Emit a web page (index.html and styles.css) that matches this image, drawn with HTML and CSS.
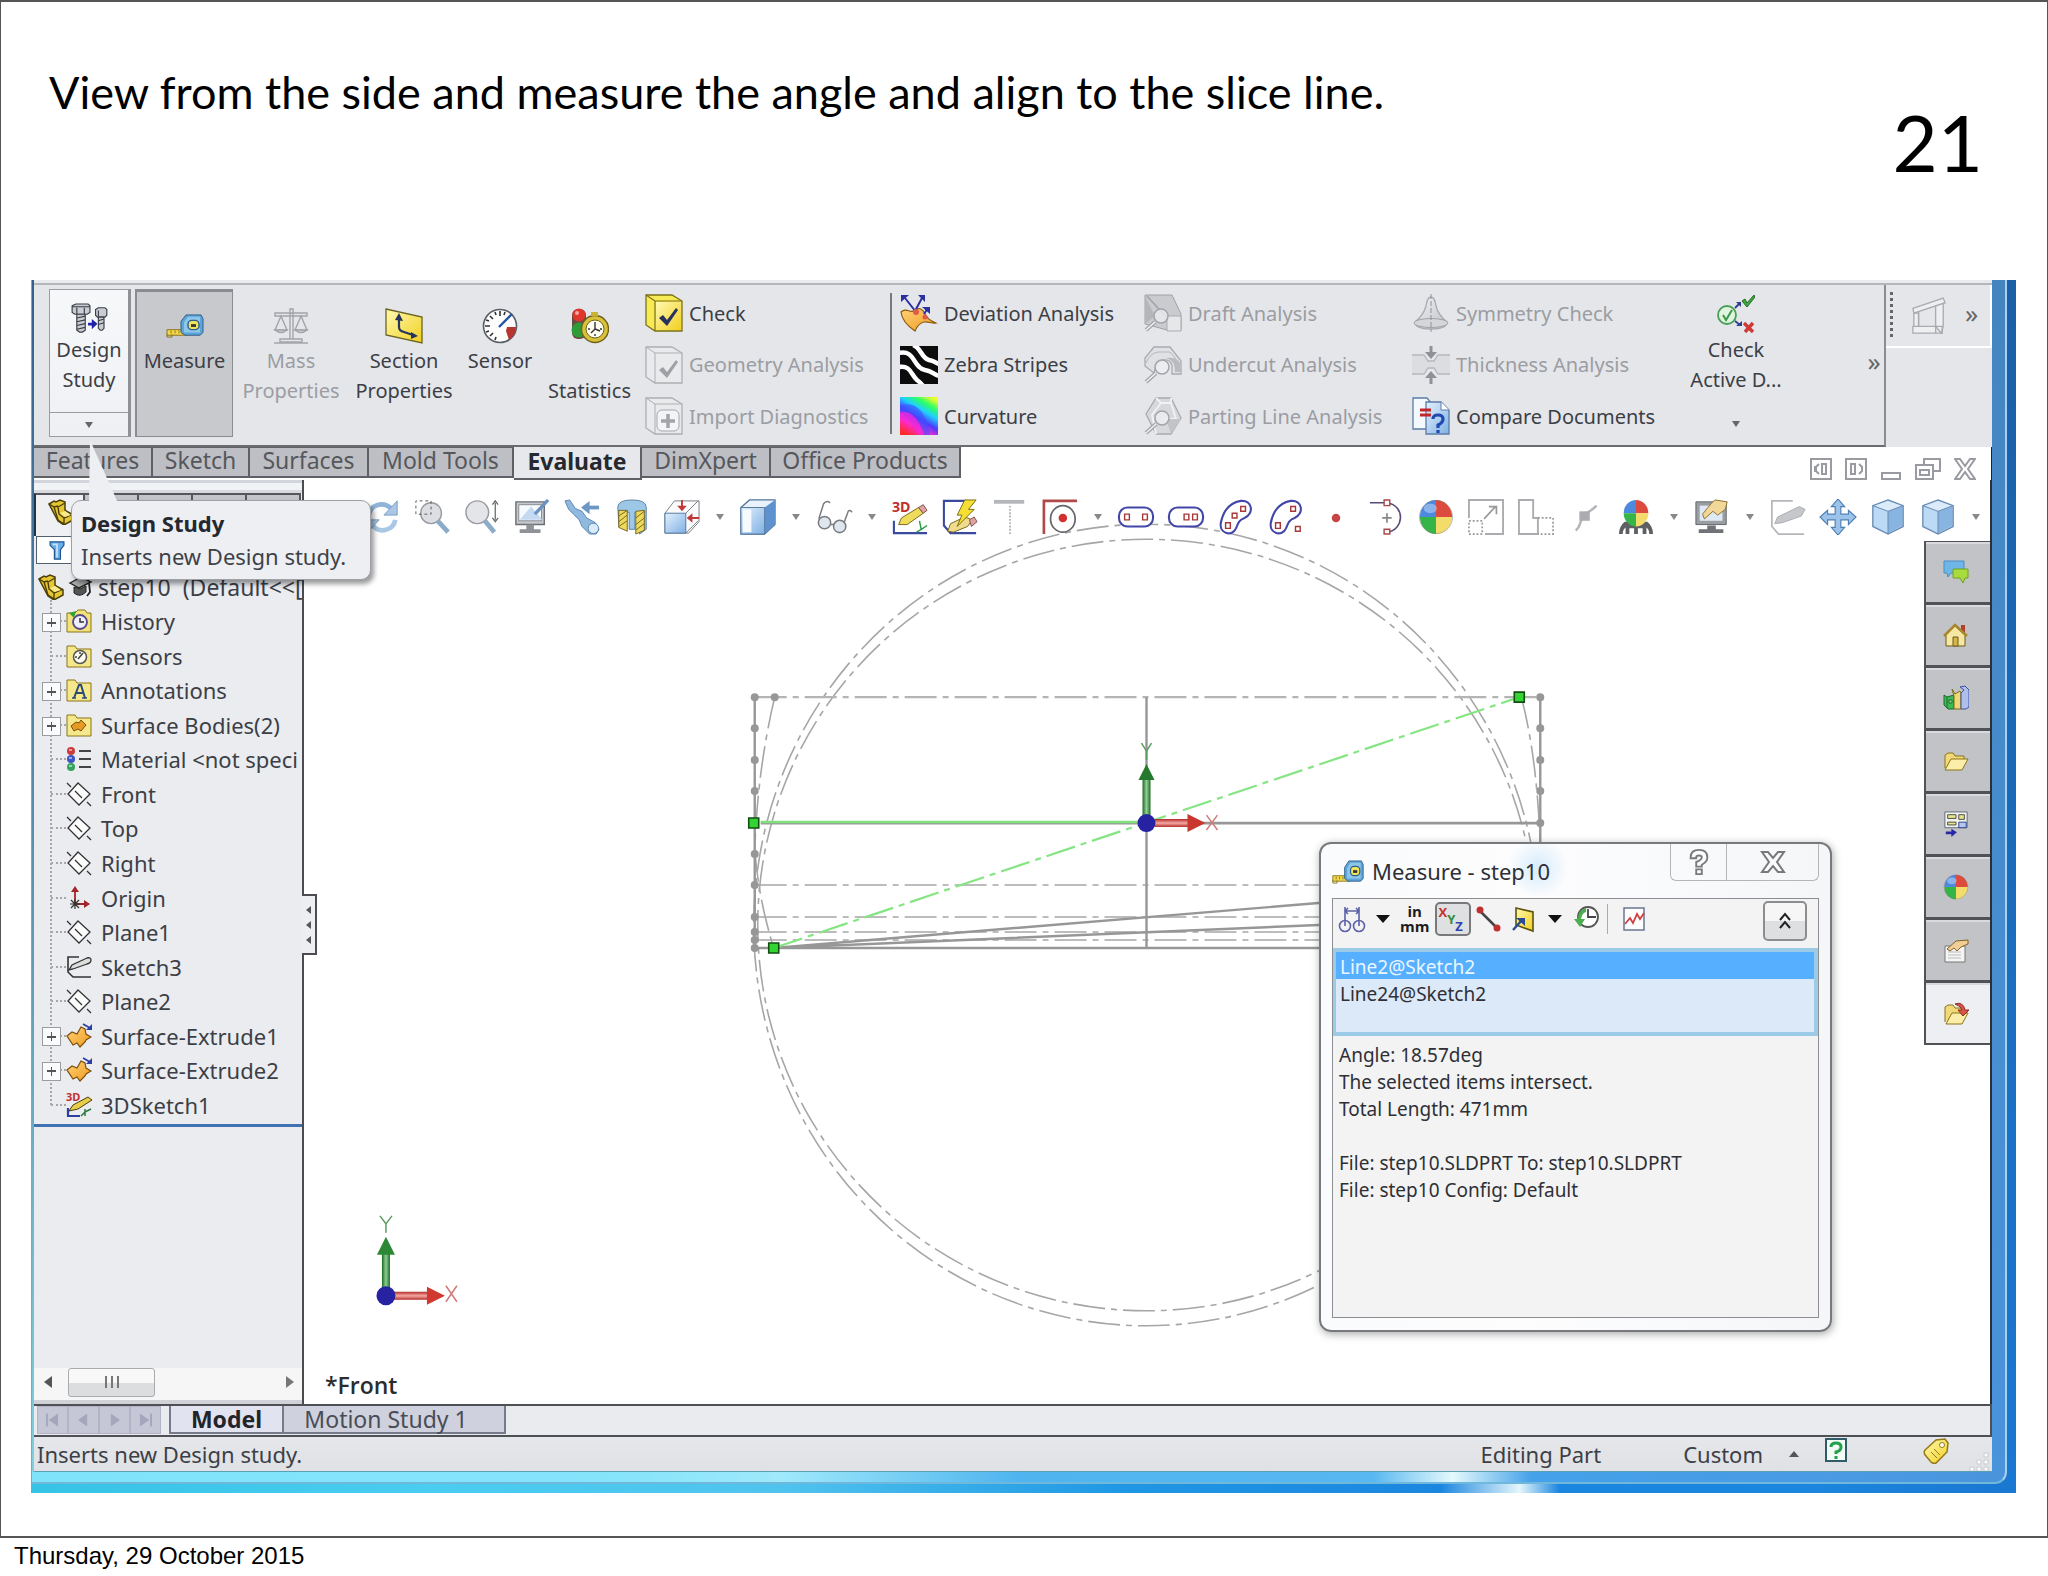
FILE: index.html
```html
<!DOCTYPE html>
<html lang="en">
<head>
<meta charset="utf-8">
<title>Slide 21 - Design Study</title>
<link rel="stylesheet" href="styles.css">
</head>
<body>
<svg class="sprite" aria-hidden="true">
  <defs>
    <linearGradient id="g-blue" x1="0" y1="0" x2="1" y2="1"><stop offset="0" stop-color="#e4f1fc"/><stop offset="1" stop-color="#7fb0e4"/></linearGradient>
    <linearGradient id="g-yellow" x1="0" y1="0" x2="1" y2="1"><stop offset="0" stop-color="#fff9b0"/><stop offset="1" stop-color="#f0d020"/></linearGradient>
    <linearGradient id="g-orange" x1="0" y1="0" x2="1" y2="1"><stop offset="0" stop-color="#ffd27a"/><stop offset="1" stop-color="#f09a1c"/></linearGradient>
    <linearGradient id="g-grey" x1="0" y1="0" x2="1" y2="1"><stop offset="0" stop-color="#f2f3f5"/><stop offset="1" stop-color="#bfc1c6"/></linearGradient>
    <linearGradient id="g-rain" x1="0.2" y1="1" x2="0.8" y2="0"><stop offset="0" stop-color="#ff2a2a"/><stop offset="0.25" stop-color="#ff2ad0"/><stop offset="0.45" stop-color="#4a3cff"/><stop offset="0.65" stop-color="#1fd0ff"/><stop offset="0.82" stop-color="#2aff6a"/><stop offset="1" stop-color="#e8ff2a"/></linearGradient>
    <linearGradient id="g-rod-v" x1="0" x2="1"><stop offset="0" stop-color="#1d6a25"/><stop offset="0.5" stop-color="#8fcf94"/><stop offset="1" stop-color="#1d6a25"/></linearGradient>
    <linearGradient id="g-rod-h" x1="0" y1="0" x2="0" y2="1"><stop offset="0" stop-color="#b32a2a"/><stop offset="0.5" stop-color="#f5a9a4"/><stop offset="1" stop-color="#b32a2a"/></linearGradient>
  </defs>

  <symbol id="i-bolts" viewBox="0 0 38 32">
    <g fill="#c9ccd2" stroke="#3a3d44" stroke-width="1.2"><path d="M1 3l4-2h13l2 2v7l-3 2H4l-3-2z"/><path d="M1 4h19M6 5v7M14 5v7" fill="none"/><path d="M6 12h9v17l-3 2H9l-3-2z"/><path d="M6 16l9-2M6 20l9-2M6 24l9-2M6 28l9-2" fill="none"/><path d="M26 7l3-2h7l2 2v6l-2 2h-8l-2-2z"/><path d="M29 15h6v12l-2 2h-2l-2-2z"/><path d="M29 19l6-2M29 23l6-2M29 8v6" fill="none"/></g>
    <path d="M18 21h4v-4l6 5-6 6v-4h-4z" fill="#2222a8"/>
  </symbol>
  <symbol id="i-tape" viewBox="0 0 38 26" preserveAspectRatio="none">
    <path d="M1 17h20v6H1z" fill="#f2d84a" stroke="#8a7318"/><path d="M1 22v3h5v-3M5 18v3M9 18v3M13 18v3" fill="none" stroke="#8a7318"/>
    <path d="M15 20V8l5-7h15l2 4v15l-3 3H19z" fill="#5fa4d6" stroke="#2c5d8c"/><path d="M18 20V9l4-6h12v17z" fill="#8cc6ea"/>
    <rect x="22" y="7" width="11" height="10" rx="4" fill="#f0e45a" stroke="#2c5d8c" stroke-width="1.4"/><path d="M25 11h5v3h-5z" fill="#333"/>
  </symbol>
  <symbol id="i-scale" viewBox="0 0 36 36">
    <g fill="none" stroke="#a2a4a9" stroke-width="1.4"><path d="M2 5h32v3H2zM17 1h3v30h-3zM7 31h22v3H7zM8 8L2 22h12zM28 8l-6 14h12z"/><path d="M1 35h34"/><path d="M2 22q6 5 12 0zM22 22q6 5 12 0z" fill="#d5d6da"/></g>
  </symbol>
  <symbol id="i-section" viewBox="0 0 38 36">
    <path d="M1 1l36 8v26L1 27z" fill="url(#g-yellow)" stroke="#6b6420" stroke-width="1.3"/><path d="M14 11v8q0 4 5 5l9 3" fill="none" stroke="#24345c" stroke-width="2.2"/><path d="M14 5l-4 7 8 1zM33 28l-7-4v7z" fill="#24345c"/>
  </symbol>
  <symbol id="i-gauge" viewBox="0 0 36 36">
    <circle cx="18" cy="18" r="16.5" fill="#fdfdfd" stroke="#5a5e66" stroke-width="1.6"/><path d="M34 19a16 16 0 0 1-7 13l-3-9 1-4z" fill="#b8342e"/><path d="M18 3v5M8 8l3 3M3 18h5M8 28l3-3M13 4l1 3M4 12l3 1M4 24l3-1M13 32l1-3M23 4l-1 3" stroke="#333" stroke-width="1.6"/><path d="M17 19L30 6" stroke="#2454a8" stroke-width="2.4"/>
  </symbol>
  <symbol id="i-stats" viewBox="0 0 38 36">
    <rect x="1" y="1" width="14" height="30" rx="6" fill="#6b4a42"/><circle cx="8" cy="7" r="6.5" fill="#e0362e"/><circle cx="6" cy="5" r="2" fill="#f6a49c"/><circle cx="8" cy="22" r="7.500" fill="#2f9a38"/><circle cx="24" cy="21" r="13.500" fill="#d9c23a" stroke="#6f611a" stroke-width="1.4"/><circle cx="24" cy="21" r="9" fill="#fffef2" stroke="#6f611a"/><path d="M24 14v7l5 2M24 21l-4 4M17 21h2M24 28v-2M31 21h-2" fill="none" stroke="#333" stroke-width="1.4"/><path d="M20 4h7v4h-7z" fill="#c9b236"/>
  </symbol>
  <symbol id="i-check" viewBox="0 0 38 38">
    <path d="M1 1h26l10 6v30H10L1 31z" fill="#f7ea55" stroke="#7d7016" stroke-width="1.3"/><path d="M1 1l9 6h27M10 7v30" fill="none" stroke="#7d7016" stroke-width="1.2"/><path d="M11 8h25v28H11z" fill="url(#g-yellow)"/><path d="M14 24l4-3 4 5 9-12 2 2-11 16z" fill="#27305e"/>
  </symbol>
  <symbol id="i-check-off" viewBox="0 0 38 38">
    <path d="M1 1h26l10 6v30H10L1 31z" fill="#e9eaec" stroke="#adafb3" stroke-width="1.3"/><path d="M1 1l9 6h27M10 7v30" fill="none" stroke="#adafb3"/><path d="M14 24l4-3 4 5 9-12 2 2-11 16z" fill="#9ea0a5"/>
  </symbol>
  <symbol id="i-import-off" viewBox="0 0 38 38">
    <path d="M1 1h26l10 6v30H10L1 31z" fill="#e9eaec" stroke="#adafb3" stroke-width="1.3"/><path d="M1 1l9 6h27M10 7v30" fill="none" stroke="#adafb3"/><rect x="12" y="13" width="22" height="21" rx="5" fill="#f4f4f6" stroke="#a5a7ab"/><path d="M23 17v14M16 24h14" stroke="#a2a4a9" stroke-width="3.500"/>
  </symbol>
  <symbol id="i-deviation" viewBox="0 0 38 38">
    <path d="M1 18c6-6 9 3 14-2 4-3 8-1 10 4s6 7 11 9c-4 1-8-2-12-1s-7 4-9 9C9 33 2 27 1 18z" fill="url(#g-orange)" stroke="#8a5a12" stroke-width="1.2"/><path d="M16 18L5 4M15 17l7-13M24 20l4-6" stroke="#2b2fa0" stroke-width="2"/><path d="M1 1h8L1 8zM18 1h7v7zM22 13h8v7z" fill="#2b2fa0"/><circle cx="16" cy="18" r="3" fill="#e05a4a"/><circle cx="25" cy="23" r="2.500" fill="#e05a4a"/>
  </symbol>
  <symbol id="i-zebra" viewBox="0 0 38 38">
    <rect width="38" height="38" fill="#0c0c0c"/><g fill="none" stroke="#fff" stroke-width="4.500"><path d="M-1 7c16-4 14 15 26 17 8 1 8 5 15 6"/><path d="M-1 21c12-2 12 8 18 13 4 3 5 4 6 6"/><path d="M13-1c8 2 8 13 16 15 5 1 7 3 10 4"/></g>
  </symbol>
  <symbol id="i-curvature" viewBox="0 0 38 38"><rect width="38" height="38" fill="url(#g-rain)"/><path d="M0 16c12-4 18 6 24 22h-6C14 26 8 22 0 24z" fill="#f02ad8" opacity=".7"/><path d="M0 8c18-4 26 8 30 30h-6C18 18 12 12 0 15z" fill="#3c50ff" opacity=".6"/></symbol>
  <symbol id="i-draft" viewBox="0 0 38 38">
    <path d="M1 1h27l9 19v16H23L1 30z" fill="#c9cbcf" stroke="#a0a2a7"/><path d="M3 2l20 22" stroke="#a0a2a7" stroke-width="1.500"/><path d="M1 2v28l10-8z" fill="#b4b6ba"/><path d="M23 22h14v15H23z" fill="#e6e7e9" stroke="#a9abb0"/><circle cx="17" cy="22" r="7" fill="#e9eaec" fill-opacity=".85" stroke="#a2a4a9" stroke-width="1.500"/><path d="M11 28l-9 8" stroke="#a2a4a9" stroke-width="4"/><path d="M11 28l-9 8" stroke="#eeeff1" stroke-width="1.600"/>
  </symbol>
  <symbol id="i-undercut" viewBox="0 0 38 38">
    <path d="M1 20V12L10 1h16l11 14v13h-9v-8q-1-7-9-6-7 1-9 13z" fill="#e0e1e4" stroke="#a9abb0" stroke-width="1.300"/><path d="M2 17q4-10 12-11h12l6 7" fill="none" stroke="#b5b7bb"/><path d="M22 12q9 2 9 14h5V17q-3-6-14-5z" fill="#b9bbbf"/><circle cx="18" cy="21" r="7" fill="#eeeff1" fill-opacity=".8" stroke="#a2a4a9" stroke-width="1.500"/><path d="M12 27l-10 9" stroke="#a2a4a9" stroke-width="4"/><path d="M12 27l-10 9" stroke="#eeeff1" stroke-width="1.600"/>
  </symbol>
  <symbol id="i-parting" viewBox="0 0 38 38">
    <path d="M12 1h15l10 20-10 16H12L2 17z" fill="#d6d8db" stroke="#a9abb0" stroke-width="1.300"/><path d="M12 1l5 5h10v-5M17 6L8 18l4 19M27 6l5 16H21" fill="none" stroke="#f2f2f4" stroke-width="1.800"/><path d="M22 22h15L27 37z" fill="#c2c4c8"/><circle cx="18" cy="21" r="7" fill="#eeeff1" fill-opacity=".8" stroke="#a2a4a9" stroke-width="1.500"/><path d="M12 27l-10 9" stroke="#a2a4a9" stroke-width="4"/><path d="M12 27l-10 9" stroke="#eeeff1" stroke-width="1.600"/>
  </symbol>
  <symbol id="i-symmetry" viewBox="0 0 38 38">
    <path d="M19 3c-3 0-4 3-5 9-2 8-6 12-11 16q0 7 16 7t16-7c-5-4-9-8-11-16-1-6-2-9-5-9z" fill="url(#g-grey)" stroke="#a9abb0" stroke-width="1.300"/><ellipse cx="19" cy="29" rx="17" ry="4.500" fill="#d4d6d9" stroke="#a0a2a7"/><path d="M19 0v38" stroke="#8f9196" stroke-dasharray="5 2"/>
  </symbol>
  <symbol id="i-thickness" viewBox="0 0 38 38">
    <path d="M0 10h11l5 5h6l5-5h11v17H27l-5-5h-6l-5 5H0z" fill="#dcdde0"/><path d="M0 9h12l4 6h6l4-6h12M0 28h12l4-6h6l4 6h12" fill="none" stroke="#b4b6ba" stroke-width="1.300"/><path d="M19 0v7M19 38v-7" stroke="#8f9196" stroke-width="3"/><path d="M13 6h12l-6 7zM13 32h12l-6-7z" fill="#8f9196"/>
  </symbol>
  <symbol id="i-compare" viewBox="0 0 38 38">
    <path d="M1 1h14l5 6v25H1z" fill="#f4f9fe" stroke="#5b7ca8" stroke-width="1.300"/><path d="M14 5h15l8 8v24H14z" fill="url(#g-blue)" stroke="#5b7ca8" stroke-width="1.300"/><path d="M29 5v8h8" fill="#fff" stroke="#5b7ca8"/><path d="M8 13h11M8 18h11" stroke="#c0282a" stroke-width="3"/><path d="M21 22q0-4 5-4t5 4-5 6v3M26 33v3" fill="none" stroke="#2048b0" stroke-width="3.200"/>
  </symbol>
  <symbol id="i-active" viewBox="0 0 38 38">
    <circle cx="10" cy="20" r="9" fill="#dff5df" stroke="#4c9c58" stroke-width="1.800"/><path d="M6 20l3 5 6-10" fill="none" stroke="#3a9a48" stroke-width="2"/><path d="M18 13l4-4M18 26l5 4" stroke="#2d3f8f" stroke-width="1.800"/><path d="M19 7h5v5zM19 31h6v-5z" fill="#2d3f8f"/><path d="M25 6l3-2 2 4 7-8 1 2-8 10z" fill="#3da83d" stroke="#236b23"/><path d="M27 28l9 9M36 28l-8 9" stroke="#cf3a36" stroke-width="3.400"/>
  </symbol>
  <symbol id="i-plane-off" viewBox="0 0 38 40">
    <g fill="#eeeff1" stroke="#a9abb0" stroke-width="1.400"><path d="M26 8l8-4v27l-2 7-6-7z"/><path d="M3 17h5v15H3z"/><path d="M2 12L34 1l2 5L3 17z"/><path d="M2 31h24v7H2z"/><path d="M8 15v16M26 31h7v7h-7" fill="none"/></g>
  </symbol>

  <symbol id="v-refresh" viewBox="0 0 38 38"><g fill="none" stroke-width="5"><path d="M5 17C7 6 20 2 29 10" stroke="#8fb4d8"/><path d="M33 22C31 33 17 37 9 28" stroke="#a9c8e6"/></g><path d="M35 2v15H21zM3 36V22h13z" fill="#a9c8e6" stroke="#7b9dc2"/></symbol>
  <symbol id="v-zoomarea" viewBox="0 0 38 38"><circle cx="18" cy="15" r="11" fill="#dcdee1" stroke="#989ba1" stroke-width="1.500"/><path d="M2 16V2h16v14z" fill="none" stroke="#555" stroke-dasharray="3 3"/><path d="M25 23l11 12" stroke="#8cabc9" stroke-width="5"/></symbol>
  <symbol id="v-zoomfit" viewBox="0 0 38 38"><circle cx="14" cy="14" r="12" fill="#e3e5e8" stroke="#989ba1" stroke-width="1.500"/><path d="M22 23l10 12" stroke="#8cabc9" stroke-width="5"/><path d="M33 4v18M30 6l3-4 3 4M30 20l3 4 3-4" fill="none" stroke="#666" stroke-width="1.300"/></symbol>
  <symbol id="v-monitor" viewBox="0 0 38 38"><path d="M2 3h30v24H2z" fill="#c5c8cc" stroke="#6c6f75" stroke-width="1.500"/><path d="M5 6h24v17H5z" fill="#f7fafd" stroke="#85888d"/><path d="M6 22L18 8l12 14z" fill="#c3daf0"/><path d="M22 16L36 1" stroke="#6a93c0" stroke-width="3.500"/><path d="M13 27h8v5h7v4H6v-4h7z" fill="#8f9297"/></symbol>
  <symbol id="v-scope" viewBox="0 0 38 38"><path d="M1 2l5-1 6 9 7 3 5 7 9 5 4 7-3 5-7 0-8-8-3-7-6-6-5-5z" fill="#8fb9df" stroke="#5b84ad"/><circle cx="31" cy="31" r="5.500" fill="#d9eaf8" stroke="#5b84ad"/><path d="M21 7h16v4H21z" fill="#6d98c6"/><path d="M27 2v14l-9-7z" fill="#6d98c6"/></symbol>
  <symbol id="v-cut" viewBox="0 0 34 38"><path d="M2 8q1-7 15-7t15 7v24l-7 5V14h-5v18l-6 0V14h-3v17l-8-4z" fill="#9cc7e6" stroke="#5780a0"/><path d="M3 12h9v22l-9-4zM21 13l9-1v21l-9 4z" fill="#efd95a" stroke="#6f6526"/><path d="M3 18l9-6M3 24l9-7M3 29l9-6M21 20l9-7M21 27l9-7M21 33l9-7" stroke="#6f6526"/></symbol>
  <symbol id="v-box-arrows" viewBox="0 0 38 38"><path d="M1 15l10-13h26v22L26 36H1z" fill="#fbfbfc" stroke="#777b82"/><path d="M1 15h22v21H1z" fill="url(#g-blue)" stroke="#4e76a3"/><path d="M23 15L36 2M23 36l13-13" stroke="#777b82"/><path d="M19 1v9M37 20H27" stroke="#c03a38" stroke-width="2"/><path d="M14 7h10l-5 6zM30 15v10l-6-5z" fill="#c03a38"/></symbol>
  <symbol id="v-box" viewBox="0 0 38 38"><path d="M1 9l9-8h27v26L26 37H1z" fill="#e8f2fb" stroke="#52749b" stroke-width="1.300"/><path d="M26 9l11-8v26L26 37z" fill="#5e92cf"/><path d="M1 9h25v28H1z" fill="url(#g-blue)" stroke="#52749b"/><path d="M3 11h9v24H3z" fill="#f6fafe"/></symbol>
  <symbol id="v-glasses" viewBox="0 0 38 38"><g fill="#dfe6ee" stroke="#777b82" stroke-width="1.600"><circle cx="9" cy="25" r="6.500"/><circle cx="25" cy="29" r="6.500"/><path d="M15 27l4 0M3 21L8 5q3-4 7-1M30 24l4-11q2-2 4 1" fill="none"/></g></symbol>
  <symbol id="v-rapid" viewBox="0 0 38 38"><path d="M25 2H2v26l7 8h27" fill="none" stroke="#3949a0" stroke-width="2.200"/><path d="M6 34l3-8 15-7 8 3-5 7-15 6z" fill="#f0dc8c" stroke="#726414"/><path d="M29 22l5-3 3 5-6 5z" fill="#e2a3a0" stroke="#7a5050"/><path d="M24 1h12l-8 10h6L16 29l5-12h-5z" fill="#f5df35" stroke="#776a10"/></symbol>
  <symbol id="v-tee" viewBox="0 0 38 38"><path d="M2 3h32" stroke="#b4b6ba" stroke-width="4"/><path d="M19 7v30" stroke="#a3a5aa" stroke-width="1.600" stroke-dasharray="2 1.500"/></symbol>
  <symbol id="v-tangent" viewBox="0 0 38 38"><path d="M2 37V2h35" fill="none" stroke="#b04a4a" stroke-width="2.800"/><ellipse cx="22" cy="21" rx="13" ry="14" fill="none" stroke="#63666c" stroke-width="1.800"/><circle cx="22" cy="20" r="4.500" fill="#d22f2f"/></symbol>
  <symbol id="v-slot1" viewBox="0 0 38 38"><rect x="1" y="9" width="36" height="20" rx="9" fill="#fff" stroke="#4146a8" stroke-width="2.200"/><path d="M7 16h5v6H7zM26 16h5v6h-5z" fill="#fff" stroke="#a83838" stroke-width="1.500"/></symbol>
  <symbol id="v-slot2" viewBox="0 0 38 38"><rect x="1" y="9" width="36" height="20" rx="9" fill="#fff" stroke="#4146a8" stroke-width="2.200"/><path d="M17 16h5v6h-5zM26 16h5v6h-5z" fill="#fff" stroke="#a83838" stroke-width="1.500"/></symbol>
  <symbol id="v-slot3" viewBox="0 0 38 38"><path d="M3 25Q7 5 24 2c13-1 14 14 4 18-6 2-7 6-9 11-4 9-18 6-16-6z" fill="#fff" stroke="#4146a8" stroke-width="2.200"/><path d="M24 8h5v5h-5zM15 15h5v5h-5zM8 25h5v6H8z" fill="#fff" stroke="#a83838" stroke-width="1.500"/></symbol>
  <symbol id="v-slot4" viewBox="0 0 38 38"><path d="M3 25Q7 5 24 2c13-1 14 14 4 18-6 2-7 6-9 11-4 9-18 6-16-6z" fill="#fff" stroke="#4146a8" stroke-width="2.200"/><path d="M24 8h5v5h-5zM8 25h5v6H8zM29 29h5v5h-5z" fill="#fff" stroke="#a83838" stroke-width="1.500"/></symbol>
  <symbol id="v-point" viewBox="0 0 38 38"><circle cx="19" cy="20" r="4.500" fill="#c84545"/></symbol>
  <symbol id="v-arc" viewBox="0 0 38 38"><path d="M2 4h18M20 4c20 3 18 29 0 31" fill="none" stroke="#5b4a78" stroke-width="1.700"/><path d="M17 1h6v6h-6zM17 32h6v5h-6z" fill="#fff" stroke="#a84848" stroke-width="1.500"/><path d="M20 15v10M15 20h10" stroke="#888" stroke-width="1.800"/></symbol>
  <symbol id="v-ball" viewBox="0 0 38 38"><path d="M19 19V1a17 18 0 0 0-17 18z" fill="#4c8ae0"/><path d="M19 19V1a17 18 0 0 1 17 18z" fill="#dd4a3e"/><path d="M19 19v18A17 18 0 0 1 2 19z" fill="#35b548"/><path d="M19 19v18a17 18 0 0 0 17-18z" fill="#f3dc6a"/><ellipse cx="13" cy="10" rx="7" ry="5" fill="#fff" opacity=".35"/><circle cx="19" cy="19" r="17.500" fill="none" stroke="#777" stroke-opacity=".5"/></symbol>
  <symbol id="v-scaleup" viewBox="0 0 38 38"><path d="M1 20V1h36v36H18" fill="none" stroke="#aaacb0" stroke-width="2"/><path d="M1 23h14v14H1z" fill="none" stroke="#999" stroke-width="1.800" stroke-dasharray="2 2"/><path d="M17 21L29 8M22 8h8v8" fill="none" stroke="#999" stroke-width="1.800"/></symbol>
  <symbol id="v-ell" viewBox="0 0 38 38"><path d="M16 21V1H1v36h20V20h-5" fill="none" stroke="#aaacb0" stroke-width="2"/><path d="M21 20h16v17H21" fill="none" stroke="#999" stroke-width="1.800" stroke-dasharray="2 2"/></symbol>
  <symbol id="v-split" viewBox="0 0 38 38"><path d="M8 33c5-2 5-11 8-15s9-5 14-11" fill="none" stroke="#b4b6ba" stroke-width="2.600"/><path d="M12 13h11v10H12z" fill="#aaacb0"/></symbol>
  <symbol id="v-display" viewBox="0 0 38 38"><path d="M1 37q0-8 6-13h24q6 5 6 13h-4q0-5-3-7v7h-4v-6h-5v6h-4v-6h-5v6H8v-7q-3 2-3 7z" fill="#5d5f63"/><path d="M19 15V1a13 14 0 0 0-13 14z" fill="#4c8ae0"/><path d="M19 15V1a13 14 0 0 1 13 14z" fill="#dd4a3e"/><path d="M19 15v14A13 14 0 0 1 6 15z" fill="#35b548"/><path d="M19 15v14a13 14 0 0 0 13-14z" fill="#f3dc6a"/></symbol>
  <symbol id="v-viewset" viewBox="0 0 38 38"><path d="M2 3h32v24H2z" fill="#9a9da2" stroke="#5f6267"/><path d="M6 7h24v16H6z" fill="#dfe9f3"/><path d="M14 28h9v4h8v4H5v-4h9z" fill="#6f7277"/><path d="M9 16L18 5l4-4 13 2-2 8-8 6-5-4-9 8z" fill="#f1d898" stroke="#8b6d2b"/></symbol>
  <symbol id="v-pencil-off" viewBox="0 0 38 38"><path d="M24 2H2v27l7 8h27" fill="none" stroke="#b4b6ba" stroke-width="1.800"/><path d="M5 26l3-7L31 8l6 3-4 7-20 7z" fill="#c6c7ca" stroke="#a9abb0"/></symbol>
  <symbol id="v-move" viewBox="0 0 38 38"><path d="M19 0l7 8h-4v8h8v-4l8 7-8 8v-5h-8v8h4l-7 8-7-8h4v-8H8v5l-8-8 8-7v4h8V8h-4z" fill="#9cc3ea" stroke="#4f7eb2" stroke-width="1.200"/></symbol>
  <symbol id="v-cube" viewBox="0 0 38 38"><path d="M19 1l16 6v22L19 37 3 29V7z" fill="#a9cdf0" stroke="#6588b0" stroke-width="1.400"/><path d="M19 13L4 8v20l15 8z" fill="#bcdaf5"/><path d="M19 13l15-5v20l-15 8z" fill="#88b4e2"/><path d="M19 2L5 7l14 6 14-6z" fill="#dcebfa"/><path d="M3 7l16 6 16-6M19 13v24" fill="none" stroke="#6588b0"/></symbol>

  <symbol id="t-part" viewBox="0 0 26 26"><path d="M1 5l5-3 2 1 4-2 5 2v8l3 2 5 3v5l-9 5-6-4z" fill="#e6c733" stroke="#4c3f0a" stroke-width="1.500"/><path d="M1 5l5 3 4 13 6 4v-6l9-4M16 19l-5-4-1-7 7-4M6 8l4-1" fill="none" stroke="#4c3f0a" stroke-width="1.400"/><path d="M12 14l5-2 6 4-6 2z" fill="#f8ea8c"/></symbol>
  <symbol id="t-cap" viewBox="0 0 24 22"><path d="M1 7l11-6 10 5-12 6z" fill="#aaa" stroke="#222" stroke-width="1.400"/><path d="M5 11v6q6 5 12-1v-6l-6 3z" fill="#555" stroke="#222"/><path d="M20 7l1 9-3 4" fill="none" stroke="#222" stroke-width="1.800"/></symbol>
  <symbol id="t-history" viewBox="0 0 26 24"><path d="M1 4h8l3-3h7l2 3h4v19H1z" fill="#f2e27a" stroke="#8b7417"/><circle cx="14" cy="13" r="7" fill="#eef" stroke="#57468c" stroke-width="1.800"/><path d="M14 9v4h4" fill="none" stroke="#333" stroke-width="1.500"/><path d="M3 4l7-2-2 7z" fill="#34a034"/></symbol>
  <symbol id="t-sensors" viewBox="0 0 26 24"><path d="M1 2h8l2 3h14v18H1z" fill="#f5e88a" stroke="#8b7417"/><circle cx="14" cy="13" r="6.500" fill="#fbfbf0" stroke="#555" stroke-width="1.500"/><path d="M12 15l5-6M9 13h2M14 8v2" stroke="#444" stroke-width="1.500"/></symbol>
  <symbol id="t-bodies" viewBox="0 0 26 24"><path d="M1 2h8l2 3h14v18H1z" fill="#f5e88a" stroke="#8b7417"/><path d="M5 13l5-4 3 1 2-3 5 5-5 6-3-2-4 2z" fill="#e59a24" stroke="#7c4f0c"/></symbol>
  <symbol id="t-material" viewBox="0 0 26 24"><path d="M13 4h12M13 12h12M13 20h12" stroke="#444" stroke-width="2"/><circle cx="5" cy="4" r="4" fill="#cc3b3b"/><circle cx="5" cy="12" r="4" fill="#3b55c4"/><circle cx="5" cy="20" r="4" fill="#35a35b"/><path d="M3 3h3M3 11h3M3 19h3" stroke="#fff"/></symbol>
  <symbol id="t-plane" viewBox="0 0 26 24"><path d="M12 1l12 11-11 11L2 12z" fill="#fbfbfc" stroke="#333" stroke-width="1.300"/><path d="M1 1l4 4M9 9l7 7M21 20l4 4" stroke="#333" stroke-width="1.300"/></symbol>
  <symbol id="t-origin" viewBox="0 0 26 24"><path d="M9 18V3M9 18h14" stroke="#a3242a" stroke-width="1.800"/><path d="M5 6l4-6 4 6zM18 14l6 4-6 4z" fill="#a3242a"/><path d="M5 14l8 8M13 14l-8 8M9 13v10M4 18h10" stroke="#333" stroke-width="1.200"/></symbol>
  <symbol id="t-sketch" viewBox="0 0 26 24"><path d="M13 2H2v15l5 5h18" fill="none" stroke="#333" stroke-width="1.600"/><path d="M3 15l3-5 15-7q4-1 4 2t-4 4L7 14z" fill="#ddd" stroke="#333" stroke-width="1.300"/></symbol>
  <symbol id="t-surface" viewBox="0 0 26 26"><path d="M1 13l5-4 5 2 4-7 4 2 1 5 5 3-5 3-1 2-5 5-3-4-4 2z" fill="url(#g-orange)" stroke="#7c4f0c" stroke-width="1.200"/><path d="M17 1l7 4" stroke="#2e3fa4" stroke-width="1.800"/><path d="M20 7h6V1z" fill="#2e3fa4"/></symbol>
  <symbol id="t-filter" viewBox="0 0 18 22"><path d="M1 1h16v4l-4 5v11H6V10L1 5z" fill="#6aaee8" stroke="#20558f" stroke-width="1.400"/><path d="M4 4h5v15" fill="none" stroke="#c7e2f8" stroke-width="2"/></symbol>

  <symbol id="p-chat" viewBox="0 0 26 26"><path d="M1 2h20v12H8l-3 4-1-4H1z" fill="#6fb6e8" stroke="#4b8dc0"/><path d="M10 10h15v9h-3l-2 5-3-5h-7z" fill="#a8dc3c" stroke="#6fa31e"/></symbol>
  <symbol id="p-home" viewBox="0 0 26 26"><path d="M18 3h4v8h-4z" fill="#b0402c"/><path d="M3 13L12 4l10 9v11H3z" fill="#f6e7a2" stroke="#6d5a1a"/><path d="M1 14L12 3l12 11" fill="none" stroke="#a8862b" stroke-width="2.500"/><path d="M10 15h5v9h-5z" fill="#d8b54a" stroke="#6d5a1a"/></symbol>
  <symbol id="p-library" viewBox="0 0 26 26"><path d="M1 10l3 2 7-2v14H5l-4-4z" fill="#3fb955" stroke="#1c6a2c"/><path d="M4 12v11M6 15h3v3H6z" fill="#9fe0a8" stroke="#1c6a2c"/><path d="M9 4l3 5 5-3 1 2v16h-7V11z" fill="#efd876" stroke="#7d6a1b"/><path d="M17 2l5-1 4 4v17l-3 2h-5V8l3-3z" fill="#aebfec" stroke="#4050a0"/></symbol>
  <symbol id="p-folder" viewBox="0 0 26 26"><path d="M2 20V7l3-2h5l2 3h9v3" fill="#f1d878" stroke="#8b7417"/><path d="M2 22l6-11h17l-6 11z" fill="#fbeea8" stroke="#8b7417"/></symbol>
  <symbol id="p-palette" viewBox="0 0 26 28"><path d="M1 1h24v17H1z" fill="#f1f3ea" stroke="#5a647c"/><path d="M4 4h9v4H4zM4 12h9v3H4zM16 4h6v5h-6z" fill="#e7e58e" stroke="#444"/><path d="M16 12h8v6h-8z" fill="#b7c6ee" stroke="#2c3c8c"/><path d="M2 22h6v-3l6 4-6 5v-3H2z" fill="#2b28a6"/></symbol>
  <symbol id="p-props" viewBox="0 0 26 26"><path d="M2 9h20v16H2z" fill="#f5f5f4" stroke="#777"/><path d="M5 15h13M5 18h13M5 21h13" stroke="#bbb"/><path d="M4 12l9-8 12-1v4l-7 3-4 4-3-3-4 3z" fill="#f0cf96" stroke="#85602a"/></symbol>
  <symbol id="p-recover" viewBox="0 0 26 26"><path d="M2 22V7l3-2h5l2 3h9v4" fill="#f1d878" stroke="#8b7417"/><path d="M3 24l6-11h16l-6 11z" fill="#fbeea8" stroke="#8b7417"/><path d="M12 4q8-3 10 6h4l-6 6-5-6h4q-1-4-7-6z" fill="#d8554a" stroke="#8e2a22"/></symbol>
</svg>

<main class="slide">
  <header class="slide-head">
    <h1 class="slide-title">View from the side and measure the angle and align to the slice line.</h1>
    <p class="slide-number">21</p>
  </header>

  <section class="desktop">
    <div class="frame">
      <div class="app">
        <div class="topstrip"></div>

        <div class="ribbon-row">
          <div class="ribbon">
            <div class="split">
              <button class="big split-main"><svg class="ic-bolts"><use href="#i-bolts"/></svg><span>Design<br>Study</span></button>
              <button class="split-drop" aria-label="Design Study options"><i class="caret"></i></button>
            </div>
            <button class="big pressed"><svg class="ic-tape"><use href="#i-tape"/></svg><span>Measure</span></button>
            <button class="big w-mass off" disabled><svg class="ic36"><use href="#i-scale"/></svg><span>Mass<br>Properties</span></button>
            <button class="big w-section"><svg class="ic36"><use href="#i-section"/></svg><span>Section<br>Properties</span></button>
            <button class="big w-sensor"><svg class="ic36"><use href="#i-gauge"/></svg><span>Sensor</span></button>
            <button class="big w-stats"><svg class="ic36"><use href="#i-stats"/></svg><span><br>Statistics</span></button>
            <div class="col col-1">
              <button class="small"><svg><use href="#i-check"/></svg>Check</button>
              <button class="small off" disabled><svg><use href="#i-check-off"/></svg>Geometry Analysis</button>
              <button class="small off" disabled><svg><use href="#i-import-off"/></svg>Import Diagnostics</button>
            </div>
            <div class="divider"></div>
            <div class="col col-2">
              <button class="small"><svg><use href="#i-deviation"/></svg>Deviation Analysis</button>
              <button class="small"><svg><use href="#i-zebra"/></svg>Zebra Stripes</button>
              <button class="small"><svg><use href="#i-curvature"/></svg>Curvature</button>
            </div>
            <div class="col col-3">
              <button class="small off" disabled><svg><use href="#i-draft"/></svg>Draft Analysis</button>
              <button class="small off" disabled><svg><use href="#i-undercut"/></svg>Undercut Analysis</button>
              <button class="small off" disabled><svg><use href="#i-parting"/></svg>Parting Line Analysis</button>
            </div>
            <div class="col col-4">
              <button class="small off" disabled><svg><use href="#i-symmetry"/></svg>Symmetry Check</button>
              <button class="small off" disabled><svg><use href="#i-thickness"/></svg>Thickness Analysis</button>
              <button class="small"><svg><use href="#i-compare"/></svg>Compare Documents</button>
            </div>
            <button class="big w-active"><svg class="ic38"><use href="#i-active"/></svg><span>Check<br>Active D...</span><i class="caret"></i></button>
            <button class="more">»</button>
          </div>
          <div class="mini">
            <i class="grip"></i>
            <svg class="mini-ic"><use href="#i-plane-off"/></svg>
            <button class="more-mini">»</button>
          </div>
        </div>

        <div class="tab-row">
          <nav class="tabs">
            <button class="tab t-features">Features</button><button class="tab t-sketch">Sketch</button><button class="tab t-surfaces">Surfaces</button><button class="tab t-mold">Mold Tools</button><button class="tab t-eval active">Evaluate</button><button class="tab t-dim">DimXpert</button><button class="tab t-office">Office Products</button>
          </nav>
          <div class="winbtns">
            <svg viewBox="0 0 22 22"><path d="M1 1h20v20H1zM9 6L6 9v4l3 3M5 8v6M12 6h4v10h-4z"/></svg>
            <svg viewBox="0 0 22 22"><path d="M1 1h20v20H1zM6 6h4v10H6zM14 6l3 3v4l-3 3M17 8v6"/></svg>
            <svg viewBox="0 0 22 22"><path d="M2 15h18v6H2z"/></svg>
            <svg viewBox="0 0 26 22"><path d="M9 6V1h16v12h-7M1 7h17v14H1zM5 12h9v5H5z"/></svg>
            <svg viewBox="0 0 22 22"><path d="M1 1h5l5 7 5-7h5l-7 10 7 10h-5l-5-7-5 7H1l7-10z"/></svg>
          </div>
        </div>

        <div class="body">
          <aside class="panel">
            <div class="panel-strip"></div>
            <div class="panel-tabs"><span class="ptab on"><svg class="ic-tree"><use href="#t-part"/></svg></span><span class="ptab"></span><span class="ptab"></span><span class="ptab"></span><span class="ptab"></span></div>
            <div class="filter"><svg><use href="#t-filter"/></svg></div>
            <div class="root"><svg class="ic-tree"><use href="#t-part"/></svg><svg class="ic-cap"><use href="#t-cap"/></svg><span>step10&nbsp; (Default&lt;&lt;[</span></div>
            <ul class="tree">
              <li class="has"><svg><use href="#t-history"/></svg>History</li>
              <li><svg><use href="#t-sensors"/></svg>Sensors</li>
              <li class="has"><svg viewBox="0 0 26 24"><path d="M1 2h8l2 3h14v18H1z" fill="#f5e88a" stroke="#8b7417"/><path d="M8 20l5-13h2l4 13M10 15h7" fill="none" stroke="#2c4a78" stroke-width="2"/><path d="M6 20h4M16 20h5" stroke="#2c4a78" stroke-width="1.500"/></svg>Annotations</li>
              <li class="has"><svg><use href="#t-bodies"/></svg>Surface Bodies(2)</li>
              <li><svg><use href="#t-material"/></svg>Material &lt;not speci</li>
              <li><svg><use href="#t-plane"/></svg>Front</li>
              <li><svg><use href="#t-plane"/></svg>Top</li>
              <li><svg><use href="#t-plane"/></svg>Right</li>
              <li><svg><use href="#t-origin"/></svg>Origin</li>
              <li><svg><use href="#t-plane"/></svg>Plane1</li>
              <li><svg><use href="#t-sketch"/></svg>Sketch3</li>
              <li><svg><use href="#t-plane"/></svg>Plane2</li>
              <li class="has"><svg><use href="#t-surface"/></svg>Surface-Extrude1</li>
              <li class="has"><svg><use href="#t-surface"/></svg>Surface-Extrude2</li>
              <li><svg viewBox="0 0 26 26"><text x="0" y="9" class="glyph-red-small">3D</text><path d="M2 16v8h12" fill="none" stroke="#2e3fa4" stroke-width="2.200"/><path d="M3 19l4-6 15-8 4 3-14 9z" fill="#e8ce48" stroke="#4b3f0c"/><path d="M19 24v-7M19 20l6-3M19 20l-4 4" stroke="#2f7a40" stroke-width="1.500"/></svg>3DSketch1</li>
            </ul>
            <div class="rollback"></div>
            <div class="hscroll"><i class="arr left"></i><span class="thumb"><i></i><i></i><i></i></span><i class="arr right"></i></div>
          </aside>

          <section class="viewport">
            <svg class="canvas" viewBox="303 480 1687 924" preserveAspectRatio="xMidYMid meet">
              <g fill="none" stroke="#a6a6a6" stroke-width="1.600" stroke-dasharray="32 6 6 6">
                <ellipse cx="1146" cy="925" rx="393" ry="401"/>
                <ellipse cx="1146" cy="925" rx="389" ry="386"/>
                <path d="M754 697h787" stroke-width="2.400" stroke="#b4b4b4"/>
                <path d="M754 885h600M754 917h600M754 932h600M754 940h600"/>
                <path d="M774 697q-18 76-20 157M1521 697q16 60 19 150M754 850q4 50 19 98"/>
              </g>
              <g fill="none" stroke="#979797" stroke-width="2.400">
                <path d="M754 697v251M1540 697v251M1146 697v251M754 948h786"/>
                <path d="M1146 823h394" stroke-width="2.800"/>
                <path d="M773 948l545-45 222-18M773 948l545-23 222-9"/>
              </g>
              <path d="M760 823h386" stroke="#979797" stroke-width="3"/>
              <path d="M760 822h386" stroke="#7fe07c" stroke-width="2.400"/>
              <path d="M773 948L1519 697" stroke="#85e583" stroke-width="2.200" stroke-dasharray="30 6 6 6"/>
              <g fill="#979797">
                <circle cx="754" cy="697" r="4"/><circle cx="774" cy="697" r="4"/><circle cx="754" cy="728" r="4"/><circle cx="754" cy="760" r="4"/><circle cx="754" cy="791" r="4"/><circle cx="754" cy="854" r="4"/><circle cx="754" cy="885" r="4"/><circle cx="754" cy="917" r="4"/><circle cx="754" cy="932" r="4"/><circle cx="754" cy="940" r="4"/><circle cx="754" cy="948" r="4"/>
                <circle cx="1540" cy="697" r="4"/><circle cx="1540" cy="728" r="4"/><circle cx="1540" cy="760" r="4"/><circle cx="1540" cy="791" r="4"/><circle cx="1540" cy="823" r="4"/>
              </g>
              <g fill="#35d435" stroke="#124d12" stroke-width="1.600"><path d="M748 818h10v10h-10zM768 943h10v10h-10zM1514 692h10v10h-10z"/></g>
              <g>
                <path d="M1142 778h8v40h-8z" fill="url(#g-rod-v)"/><path d="M1138 780l8-16 8 16z" fill="#24792c"/>
                <path d="M1154 819h36v8h-36z" fill="url(#g-rod-h)"/><path d="M1187 814l18 9-18 9z" fill="#c8362e"/>
                <circle cx="1146" cy="823" r="9" fill="#2622a2"/>
                <g fill="none" stroke-width="1.500"><path d="M1141 743l5 8v9M1151 743l-5 8" stroke="#5c9c62"/><path d="M1206 815l11 15M1217 815l-11 15" stroke="#d07a7a"/></g>
              </g>
              <g>
                <path d="M381 1253h8v38h-8z" fill="url(#g-rod-v)"/><path d="M376 1255l9-18 9 18z" fill="#2c8834"/>
                <path d="M393 1292h36v8h-36z" fill="url(#g-rod-h)"/><path d="M426 1287l18 9-18 9z" fill="#d03a2e"/>
                <circle cx="385" cy="1296" r="9.500" fill="#2622a2"/>
                <g fill="none" stroke-width="1.500"><path d="M379 1216l6 8v9M391 1216l-6 8" stroke="#5c9c62"/><path d="M445 1286l11 16M456 1286l-11 16" stroke="#d07a7a"/></g>
              </g>
              <text x="324" y="1394" class="view-name">*Front</text>
            </svg>

            <div class="hud">
              <svg><use href="#v-refresh"/></svg><svg><use href="#v-zoomarea"/></svg><svg><use href="#v-zoomfit"/></svg><svg><use href="#v-monitor"/></svg><svg><use href="#v-scope"/></svg><svg><use href="#v-cut"/></svg><svg><use href="#v-box-arrows"/></svg><i class="caret"></i><svg><use href="#v-box"/></svg><i class="caret"></i><svg><use href="#v-glasses"/></svg><i class="caret"></i><svg viewBox="0 0 38 38"><text x="0" y="14" class="glyph-red">3D</text><path d="M2 23v13h35" fill="none" stroke="#3949a0" stroke-width="2.200"/><path d="M7 27l3-7 18-11 5 6-17 12z" fill="#f0dc5c" stroke="#726414"/><path d="M28 9l5-3 4 6-4 3z" fill="#e2a3a0" stroke="#7a5050"/><path d="M31 33l-2-10M31 32l6-4M31 32l-5 3" stroke="#2b9a48" stroke-width="1.500"/></svg><svg><use href="#v-rapid"/></svg><svg><use href="#v-tee"/></svg><svg><use href="#v-tangent"/></svg><i class="caret"></i><svg><use href="#v-slot1"/></svg><svg><use href="#v-slot2"/></svg><svg><use href="#v-slot3"/></svg><svg><use href="#v-slot4"/></svg><svg><use href="#v-point"/></svg><svg><use href="#v-arc"/></svg><svg><use href="#v-ball"/></svg><svg><use href="#v-scaleup"/></svg><svg><use href="#v-ell"/></svg><svg><use href="#v-split"/></svg><svg><use href="#v-display"/></svg><i class="caret"></i><svg><use href="#v-viewset"/></svg><i class="caret"></i><svg><use href="#v-pencil-off"/></svg><svg><use href="#v-move"/></svg><svg><use href="#v-cube"/></svg><svg><use href="#v-cube"/></svg><i class="caret"></i>
            </div>

            <div class="taskpane">
              <button aria-label="Forum"><svg><use href="#p-chat"/></svg></button>
              <button aria-label="Resources"><svg><use href="#p-home"/></svg></button>
              <button aria-label="Design Library"><svg><use href="#p-library"/></svg></button>
              <button aria-label="File Explorer"><svg><use href="#p-folder"/></svg></button>
              <button aria-label="View Palette"><svg><use href="#p-palette"/></svg></button>
              <button aria-label="Appearances"><svg><use href="#v-ball"/></svg></button>
              <button aria-label="Custom Properties"><svg><use href="#p-props"/></svg></button>
              <button class="on" aria-label="Document Recovery"><svg><use href="#p-recover"/></svg></button>
            </div>

            <div class="handle"><i></i><i></i><i></i></div>

            <section class="dialog">
              <header class="dlg-head">
                <svg class="dlg-ic"><use href="#i-tape"/></svg>
                <h2>Measure - step10</h2>
                <div class="dlg-btns">
                  <button aria-label="Help"><svg viewBox="0 0 22 28"><path d="M2 9q0-8 9-8t9 8q0 5-6 8v2H8v-5q6-2 6-5 0-2-3-2T8 9v1H2zM8 22h6v5H8z"/></svg></button>
                  <button class="wide" aria-label="Close"><svg viewBox="0 0 24 24"><path d="M1 2h6l5 6 5-6h6l-7 10 7 10h-6l-5-6-5 6H1l7-10z"/></svg></button>
                </div>
              </header>
              <div class="dlg-body">
                <div class="dlg-tools">
                  <svg class="tool" viewBox="0 0 28 28"><g fill="none" stroke="#5d62a8" stroke-width="1.600"><circle cx="7" cy="21" r="5.500"/><circle cx="21" cy="21" r="5.500"/><path d="M7 2v19M21 2v19M7 6h14M10 3L7 6l3 3M18 3l3 3-3 3"/></g></svg>
                  <i class="drop"></i>
                  <span class="units">in<br>mm</span>
                  <button class="xyz" aria-label="Show XYZ measurements"><b class="x">X</b><b class="y">Y</b><b class="z">Z</b></button>
                  <svg class="tool" viewBox="0 0 28 28"><path d="M5 5l18 18" stroke="#444" stroke-width="2.500"/><circle cx="6" cy="5" r="3.500" fill="#c03030"/><circle cx="23" cy="23" r="3.500" fill="#c03030"/></svg>
                  <svg class="tool gap-l" viewBox="0 0 28 28"><path d="M6 3l17 4v19L6 20z" fill="url(#g-yellow)" stroke="#5e520e" stroke-width="1.600"/><path d="M3 25l9-10" stroke="#2b4a94" stroke-width="2.400"/><path d="M6 13h9v8z" fill="#2b4a94"/></svg>
                  <i class="drop"></i>
                  <svg class="tool" viewBox="0 0 28 28"><circle cx="16" cy="12" r="10" fill="#fff" stroke="#555" stroke-width="1.800"/><path d="M16 4v8h8" fill="none" stroke="#444" stroke-width="1.800"/><path d="M14 3Q6 5 6 14H2l6 8 5-8H9q1-6 5-7z" fill="#4cae50"/></svg>
                  <i class="sep"></i>
                  <svg class="tool" viewBox="0 0 28 28"><path d="M4 3h20v22H4z" fill="#fdfdfe" stroke="#6a7690" stroke-width="1.500"/><path d="M5 19l5-6 3 5 4-9 3 5 4-6" fill="none" stroke="#d04040" stroke-width="1.800"/></svg>
                  <button class="collapse" aria-label="Collapse"><svg viewBox="0 0 12 18"><path d="M1 8l5-6 5 6M1 16l5-6 5 6"/></svg></button>
                </div>
                <ul class="picks" role="listbox" aria-label="Selected items">
                  <li class="sel" role="option" aria-selected="true">Line2@Sketch2</li>
                  <li role="option" aria-selected="false">Line24@Sketch2</li>
                </ul>
                <p class="result">Angle: 18.57deg<br>The selected items intersect.<br>Total Length: 471mm<br><br>File: step10.SLDPRT To: step10.SLDPRT<br>File: step10 Config: Default</p>
              </div>
            </section>
          </section>
        </div>

        <div class="sheets">
          <div class="nav">
            <svg viewBox="0 0 30 28"><path d="M8 7h2v14H8zM21 7v14l-10-7z"/></svg><svg viewBox="0 0 30 28"><path d="M19 7v14L9 14z"/></svg><svg viewBox="0 0 30 28"><path d="M11 7v14l10-7z"/></svg><svg viewBox="0 0 30 28"><path d="M20 7h2v14h-2zM9 7v14l10-7z"/></svg>
          </div>
          <button class="sheet model">Model</button>
          <button class="sheet motion">Motion Study 1</button>
        </div>

        <footer class="status">
          <span class="st-msg">Inserts new Design study.</span>
          <span class="st-edit">Editing Part</span>
          <span class="st-custom">Custom</span>
          <i class="up"></i>
          <svg class="st-help" viewBox="0 0 22 24"><path d="M1 1h20v22H1z" fill="#f2fbf6" stroke="#2f5c68" stroke-width="2"/><path d="M6 9q0-4 5-4t5 4-5 5v2M11 18v3" fill="none" stroke="#23a04c" stroke-width="3"/></svg>
          <svg class="st-tag" viewBox="0 0 26 26"><path d="M2 12L13 2l9-1 3 4-1 9-11 11q-3 1-5-1l-5-6q-3-3-1-6z" fill="url(#g-yellow)" stroke="#95791a" stroke-width="1.500"/><circle cx="19" cy="7" r="2.500" fill="#fff" stroke="#95791a"/><path d="M8 14l6 6M11 11l6 6" stroke="#95791a"/></svg>
          <svg class="st-grip" viewBox="0 0 20 20"><path d="M15 2h4v4h-4zM15 9h4v4h-4zM8 9h4v4H8zM15 16h4v4h-4zM8 16h4v4H8zM1 16h4v4H1z" fill="#fbfbfc" stroke="#c2c4c8" stroke-width=".8"/></svg>
        </footer>

        <div class="tooltip" role="tooltip">
          <svg class="tip-arrow" viewBox="0 0 30 64"><path d="M0 64L1 1l28 63z"/></svg>
          <strong>Design Study</strong>
          <span>Inserts new Design study.</span>
        </div>
      </div>
    </div>
  </section>
</main>
<p class="date">Thursday, 29 October 2015</p>
</body>
</html>
```
FILE: styles.css
```css
* { box-sizing: border-box; }
body { margin: 0; background: #fff; color: #3c3f46; font-family: "Noto Sans", "Open Sans", sans-serif; font-size: 20px; }
button { font: inherit; color: inherit; background: none; border: 0; padding: 0; margin: 0; }
h1, h2, p, ul { margin: 0; padding: 0; font-weight: 400; }
ul { list-style: none; }
svg { display: block; flex: none; }
.sprite { position: absolute; width: 0; height: 0; }
.glyph-red { font: 700 15px "Noto Sans", sans-serif; fill: #c0302c; }
.glyph-red-small { font: 700 11px "Noto Sans", sans-serif; fill: #c0302c; }

/* slide */
.slide { border: 2px solid #555; border-left-width: 1px; border-right-width: 1px; padding-bottom: 43px; }
.slide-head { height: 278px; display: flex; justify-content: space-between; padding: 62px 64px 0 48px; color: #000; font-family: Lato, "Open Sans", sans-serif; }
.slide-title { font-size: 45px; line-height: 56px; white-space: nowrap; }
.slide-number { font-size: 78px; line-height: 96px; padding-top: 30px; }
.date { padding: 4px 14px; color: #000; font: 24px/28px "Liberation Sans", Arial, sans-serif; }

/* desktop and window frame */
.desktop { margin: 0 31px 0 30px; padding: 0 9px 9px 1px; background: linear-gradient(90deg, #35c3e6 0, #49cdf0 20%, #4fc3ee 38%, #1f97e4 55%, #1b86df 71%, #e4f6fb 75%, #1b86df 77%, #1b86df 90%, transparent 99%), linear-gradient(#1b5fa6, #1a78d2); }
.frame { padding: 0 13px 10px 0; border-right: 2px solid #a9cff0; border-bottom: 2px solid #6fb8dc; border-bottom-right-radius: 12px; background: linear-gradient(90deg, #7fe3fa 0, #86e4fb 30%, #9fe9fb 38%, #4fb4ef 50%, #58b8f1 68%, #e4f9fb 72%, #45a2ea 76%, #4a97e0 97%, transparent 99%), linear-gradient(#4485c0, #4a94dc); }
.app { position: relative; display: flex; flex-direction: column; padding-left: 2px; background: linear-gradient(#33608f, #5d92b0 50%, #7fd0e0) 0 0 / 2px 100% no-repeat #e4e6ea; }

/* ribbon */
.topstrip { height: 5px; background: #e8eaee; border-bottom: 2px solid #b4b6ba; }
.ribbon-row { display: flex; height: 162px; }
.ribbon { flex: 1; display: flex; border-right: 2px solid #8a8c90; border-bottom: 2px solid #6a6c70; padding: 4px 0 8px 15px; }
.big { display: flex; flex-direction: column; align-items: center; line-height: 30px; padding-top: 19px; }
.big span { display: block; white-space: nowrap; margin-top: 2px; }
.ic36 { width: 38px; height: 36px; }
.ic38 { width: 38px; height: 38px; }
.ic-bolts { width: 38px; height: 30px; }
.ic-tape { width: 38px; height: 24px; margin: 6px 0; }
.off { color: #9b9da2; }
.split { width: 82px; display: flex; flex-direction: column; border: 1px solid #9a9ca1; border-right: 3px solid #8f9196; background: linear-gradient(#f7f8fa, #eff0f3); }
.split-main { flex: 1; padding-top: 13px; }
.split-drop { height: 24px; border-top: 1px solid #9a9ca1; display: flex; align-items: center; justify-content: center; }
.caret { width: 26px; display: flex; justify-content: center; align-items: center; }
.caret::before { content: ""; border: 4px solid transparent; border-top: 6px solid #666; border-bottom: 0; }
.pressed { width: 98px; margin-left: 4px; margin-right: 1px; background: #c8c9cd; border: 2px solid #8a8c91; border-width: 3px 1px 1px 2px; }
.pressed.big { padding-top: 16px; }
.w-mass { width: 114px; }
.w-section { width: 112px; }
.w-sensor { width: 80px; }
.w-stats { width: 99px; }
.w-active { width: 120px; padding-top: 6px; }
.w-active .caret { margin-top: 26px; }
.col { display: flex; flex-direction: column; justify-content: space-between; margin-bottom: -3px; }
.col-1 { width: 251px; padding-left: 6px; }
.col-2 { width: 246px; padding-left: 8px; }
.col-3 { width: 268px; padding-left: 6px; }
.col-4 { width: 270px; padding-left: 6px; }
.divider { width: 2px; margin: 4px 0 3px; background: #77797e; }
.small { display: flex; align-items: center; gap: 6px; height: 48px; white-space: nowrap; text-align: left; }
.small svg { width: 38px; height: 38px; }
.more { margin-left: auto; width: 20px; padding-bottom: 4px; font-size: 26px; color: #666; }
.mini { width: 106px; height: 63px; display: flex; align-items: center; gap: 18px; padding-left: 4px; border-right: 2px solid #fff; border-bottom: 2px solid #fff; }
.mini-ic { width: 36px; height: 40px; }
.grip { width: 3px; height: 48px; background: repeating-linear-gradient(#666 0 3px, transparent 3px 6px); }
.more-mini { font-size: 26px; padding-bottom: 5px; color: #666; }

/* command tabs */
.tab-row { display: flex; justify-content: space-between; height: 33px; background: #fff; border-right: 1px solid #223; }
.tabs { display: flex; align-items: flex-start; }
.tab { height: 31px; line-height: 25px; padding-bottom: 3px; font-size: 23px; color: #55575c; background: #bebfc4; border: solid #5e6065; border-width: 1px 2px 2px 0; white-space: nowrap; }
.tab.active { height: 33px; color: #25282e; font-weight: 700; background: #e6e8ec; border-top: 0; }
.t-features { width: 119px; }
.t-sketch { width: 97px; }
.t-surfaces { width: 119px; }
.t-mold { width: 145px; }
.t-eval { width: 128px; }
.t-dim { width: 129px; }
.t-office { width: 190px; }
.winbtns { display: flex; gap: 13px; padding: 11px 15px 0 0; }
.winbtns svg { width: 22px; height: 22px; fill: none; stroke: #999ba0; stroke-width: 2; }
.winbtns svg:nth-child(4) { width: 26px; }

/* body */
.body { display: flex; min-height: 924px; }
.panel { width: 270px; flex: none; display: flex; flex-direction: column; background: #eaecf0; border-right: 2px solid #4a4c50; overflow: hidden; }
.panel-strip { height: 13px; background: linear-gradient(#d3d5dd 0 3px, #f0f2f6 3px 10px, #d8dae0 10px); }
.panel-tabs { display: flex; height: 43px; }
.ptab { width: 54px; flex: none; border: solid #55575c; border-width: 2px 2px 0 0; background: #c3c4c9; }
.ptab.on { width: 51px; background: #eef0f4; border-left: 2px solid #234; padding: 4px 0 0 12px; }
.filter { height: 28px; margin: 0 2px; padding: 4px 0 0 11px; background: #fff; border: 1px solid #55606e; }
.filter svg { width: 18px; height: 19px; }
.root { display: flex; align-items: center; gap: 4px; height: 40px; padding: 6px 0 0 4px; font-size: 23px; white-space: nowrap; }
.ic-tree { width: 26px; height: 26px; }
.ic-cap { width: 26px; height: 22px; }
.tree { display: grid; grid-auto-rows: 1fr; height: 518px; font-size: 22px; position: relative; }
.tree::before { content: ""; position: absolute; left: 16px; top: -4px; bottom: 17px; border-left: 2px dotted #a5a7ab; }
.tree li { display: flex; align-items: center; gap: 9px; position: relative; white-space: nowrap; }
.tree li::before { content: ""; width: 15px; margin: 0 -9px 0 17px; border-top: 2px dotted #a5a7ab; }
.tree li.has::after { content: ""; position: absolute; left: 8px; top: 9px; width: 17px; height: 17px; border: 1px solid #9a9ca0; background: linear-gradient(#555, #555) 50% 50% / 9px 2px no-repeat, linear-gradient(#555, #555) 50% 50% / 1px 9px no-repeat, #fafbfc; }
.tree svg { width: 26px; height: 26px; }
.rollback { height: 3px; margin-top: 2px; background: #3f72b0; }
.hscroll { margin-top: auto; display: flex; align-items: center; height: 36px; padding: 0 8px 4px 10px; background: #f6f6f6; border-bottom: 4px solid #d0d2d8; }
.thumb { width: 87px; height: 29px; margin-left: 16px; display: flex; justify-content: center; align-items: center; gap: 4px; border: 1px solid #a9abaf; border-radius: 3px; background: linear-gradient(#f8f8f8 50%, #dcdddf 50%); }
.thumb i { width: 2px; height: 12px; background: #777; }
.arr { border: 6px solid transparent; }
.arr.left { border-right: 8px solid #555; border-left: 0; }
.arr.right { border-left: 8px solid #777; border-right: 0; margin-left: auto; }

.viewport { position: relative; flex: 1; display: flex; flex-direction: column; background: #fff; border-right: 2px solid #2a3038; }
.canvas { position: absolute; inset: 0; width: 100%; height: 100%; }
.view-name { font: 600 23px "Open Sans", sans-serif; fill: #2c2c2c; }
.hud { position: relative; display: flex; height: 61px; padding: 13px 0 0 53px; }
.hud svg { width: 38px; height: 36px; margin: 6px 6px 0; }
.hud .caret { height: 48px; }
.hud .caret::before { border-top-color: #888; }
.taskpane { position: relative; align-self: flex-end; width: 66px; height: 504px; display: grid; grid-auto-rows: 1fr; }
.taskpane button { display: flex; align-items: center; padding-left: 17px; background: #c2c3c7; border: 2px solid #505257; border-width: 1px 0 2px 2px; box-shadow: inset 0 2px #d9dadd; }
.taskpane button.on { background: #edeff3; }
.taskpane svg { width: 26px; height: 26px; }
.handle { position: absolute; left: -2px; top: 414px; width: 15px; height: 61px; display: flex; flex-direction: column; align-items: center; justify-content: center; gap: 7px; background: #eceef1; border: 2px solid #4a4c50; border-left: 0; }
.handle i { border: 4px solid transparent; border-right: 5px solid #555; border-left: 0; }

/* measure dialog */
.dialog { position: absolute; right: 158px; top: 362px; width: 513px; height: 490px; display: flex; flex-direction: column; padding: 0 11px 12px 11px; border: 2px solid #77797c; border-radius: 12px; background: linear-gradient(90deg, #fafbfc, #fdfdfe 40%, #f4f6f8); box-shadow: 1px 2px 8px rgba(0, 0, 0, .35); color: #2e3036; }
.dlg-head { display: flex; height: 54px; align-items: flex-start; background: radial-gradient(circle at 206px 24px, #d5ebfb 0, transparent 30px); }
.dlg-ic { width: 32px; height: 24px; margin: 16px 8px 0 0; }
.dlg-head h2 { font-size: 22px; line-height: 30px; margin-top: 12px; }
.dlg-btns { margin-left: auto; display: flex; border: 1px solid #b3b5b8; border-top: 0; border-radius: 0 0 6px 6px; height: 37px; }
.dlg-btns button { width: 55px; display: flex; justify-content: center; align-items: center; }
.dlg-btns .wide { width: 92px; border-left: 1px solid #b3b5b8; }
.dlg-btns svg { width: 22px; height: 26px; fill: #fbfbfb; stroke: #77797d; stroke-width: 2; }
.dlg-btns .wide svg { width: 26px; height: 24px; }
.dlg-body { flex: 1; border: 1px solid #8c8e91; background: #f3f3f4; }
.dlg-tools { display: flex; align-items: center; height: 49px; padding: 0 11px 10px 5px; }
.tool { width: 28px; height: 28px; }
.gap-l { margin-left: 8px; }
.drop { margin: 0 10px; border: 7px solid transparent; border-top: 8px solid #111; border-bottom: 0; }
.units { color: #1d1d1d; font: 700 15px/15px "Open Sans", sans-serif; text-align: center; margin-right: 6px; }
.xyz { width: 36px; height: 34px; margin-right: 3px; border: 2px solid #77797d; border-radius: 5px; background: #dfe0e2; display: flex; font: 13px/14px "Open Sans", sans-serif; padding: 1px; }
.xyz .x { color: #c4302c; }
.xyz .y { color: #2f8f3a; align-self: center; }
.xyz .z { color: #2d43b0; align-self: flex-end; }
.sep { width: 1px; height: 30px; background: #aaa; margin: 0 12px 0 7px; }
.collapse { margin: 4px 0 0 auto; width: 44px; height: 40px; flex: none; border: 2px solid #8b8d90; border-radius: 5px; background: linear-gradient(#f6f6f6 50%, #dedfe1 50%); display: flex; align-items: center; justify-content: center; }
.collapse svg { width: 12px; height: 18px; fill: none; stroke: #222; stroke-width: 2; }
.picks { height: 88px; border: 4px solid #9ccbe8; border-left-width: 3px; background: #dce9f8; font-size: 19px; line-height: 27px; }
.picks li { height: 27px; padding: 2px 0 0 4px; }
.picks .sel { background: #57b0ff; color: #eaf6ff; }
.result { padding: 6px; font-size: 19px; line-height: 27px; }

/* bottom rows */
.sheets { display: flex; height: 33px; padding-left: 3px; background: #e9ebef; border: solid #4e5056; border-width: 2px 2px 2px 0; }
.nav { display: flex; margin-right: 8px; }
.nav svg { width: 31px; height: 28px; background: #c6c7d6; border: 1px solid #b2b3c6; fill: #a5a6bb; }
.sheet { height: 28px; font-size: 23px; line-height: 26px; border: 2px solid #777a8a; border-top: 0; }
.model { width: 115px; color: #22242a; font-weight: 700; background: #e2e3f0; }
.motion { width: 222px; padding-right: 16px; border-left: 0; background: #cfd1de; color: #4a4c55; }
.status { display: flex; align-items: center; height: 35px; padding: 0 3px; font-size: 22px; background: linear-gradient(#e6e7ea, #dfe1e4); border-bottom: 1px solid #5aa0b4; }
.st-edit { margin-left: auto; }
.st-custom { margin-left: 82px; }
.up { margin: 0 26px; border: 5px solid transparent; border-bottom: 6px solid #555; border-top: 0; }
.st-help { width: 22px; height: 24px; margin-bottom: 8px; }
.st-tag { width: 26px; height: 26px; margin: 0 20px 6px 76px; }
.st-grip { width: 20px; height: 20px; align-self: flex-end; }

/* tooltip */
.tooltip { position: absolute; left: 39px; top: 220px; width: 300px; height: 80px; padding: 7px 9px; display: flex; flex-direction: column; border: 1px solid #9fa1a6; border-radius: 10px; background: #edeff3; box-shadow: 3px 4px 5px rgba(0, 0, 0, .4); color: #3e4148; font-size: 22px; line-height: 36px; white-space: nowrap; }
.tooltip strong { line-height: 30px; color: #25282e; }
.tip-arrow { position: absolute; left: 17px; top: -62px; width: 30px; height: 64px; fill: #edeff3; }
```
